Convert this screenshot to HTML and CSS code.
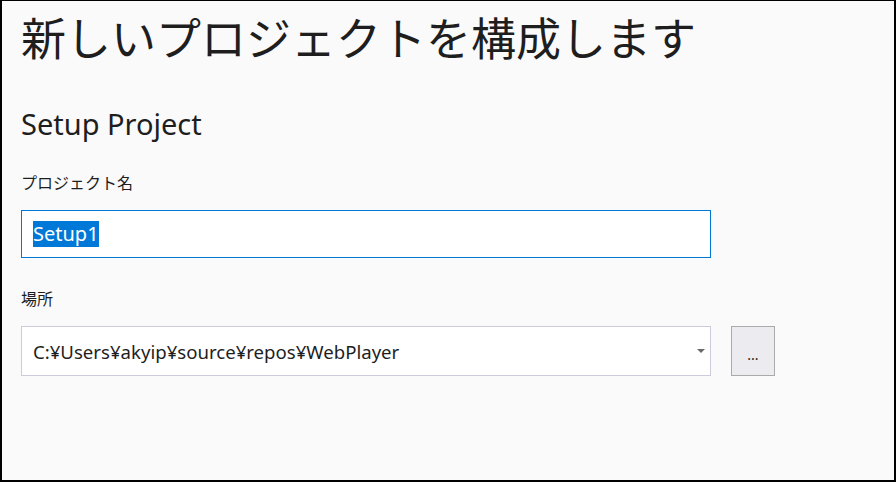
FILE: index.html
```html
<!DOCTYPE html>
<html lang="ja">
<head>
  <meta charset="UTF-8" />
  <meta name="viewport" content="width=device-width, initial-scale=1.0"/>
  <title>新しいプロジェクトを構成します</title>
  <link rel="stylesheet" href="styles.css">
</head>
<body>

<div class="window">
  <h1 class="title">新しいプロジェクトを構成します</h1>
  <h2 class="template">Setup Project</h2>

  <!-- Project name -->
  <div class="field">
    <div class="label">プロジェクト名</div>
    <div class="textbox focused"><span class="selected">Setup1</span></div>
  </div>

  <!-- Location -->
  <div class="field">
    <div class="label">場所</div>
    <div class="location-row">
      <div class="textbox combo">
        <span>C:¥Users¥akyip¥source¥repos¥WebPlayer</span>
        <span class="arrow"></span>
      </div>
      <button class="browse">...</button>
    </div>
  </div>
</div>

</body>
</html>
```

FILE: styles.css
```css
html, body {
  margin: 0;
  padding: 0;
}

body {
  font-family: "Noto Sans", "Noto Sans CJK JP", sans-serif;
  color: #1e1e1e;
  background: #fafafa;
}

.window {
  box-sizing: border-box;
  width: 896px;
  height: 482px;
  border: 2px solid #000;
  border-top-width: 1px;
  background: #fafafa;
  padding: 0 0 0 19px;
}

.title {
  margin: 0;
  padding-top: 4px;
  font-family: "Noto Sans CJK JP", sans-serif;
  font-weight: normal;
  font-size: 45px;
  line-height: 64px;
}

.template {
  margin: 37px 0 0 0;
  font-weight: normal;
  font-size: 29px;
  line-height: 36px;
}

.field {
  margin-top: 29px;
}

.label {
  font-family: "Noto Sans CJK JP", sans-serif;
  font-size: 16px;
  line-height: 22px;
  margin-bottom: 17px;
}

.textbox {
  box-sizing: border-box;
  width: 690px;
  height: 48px;
  background: #fff;
  border: 1px solid #cbcbdb;
  display: flex;
  align-items: center;
  padding-left: 11px;
  font-size: 18.6px;
  font-family: "Noto Sans", "Noto Sans CJK JP", sans-serif;
}

.textbox.focused {
  border-color: #0078d7;
  font-size: 20px;
}

.selected {
  background: #0078d7;
  color: #fff;
  line-height: 26px;
}

.location-row {
  display: flex;
  align-items: center;
  gap: 20px;
}

.combo {
  height: 50px;
  justify-content: space-between;
  padding-right: 5px;
}

.arrow {
  width: 0;
  height: 0;
  border-left: 4px solid transparent;
  border-right: 4px solid transparent;
  border-top: 4px solid #6a6a6a;
}

.browse {
  box-sizing: border-box;
  width: 44px;
  height: 50px;
  background: #ececf0;
  border: 1px solid #aaaaaa;
  font-family: "Noto Sans", sans-serif;
  font-size: 14px;
  color: #1e1e1e;
  padding: 6px 0 0 0;
}
```
